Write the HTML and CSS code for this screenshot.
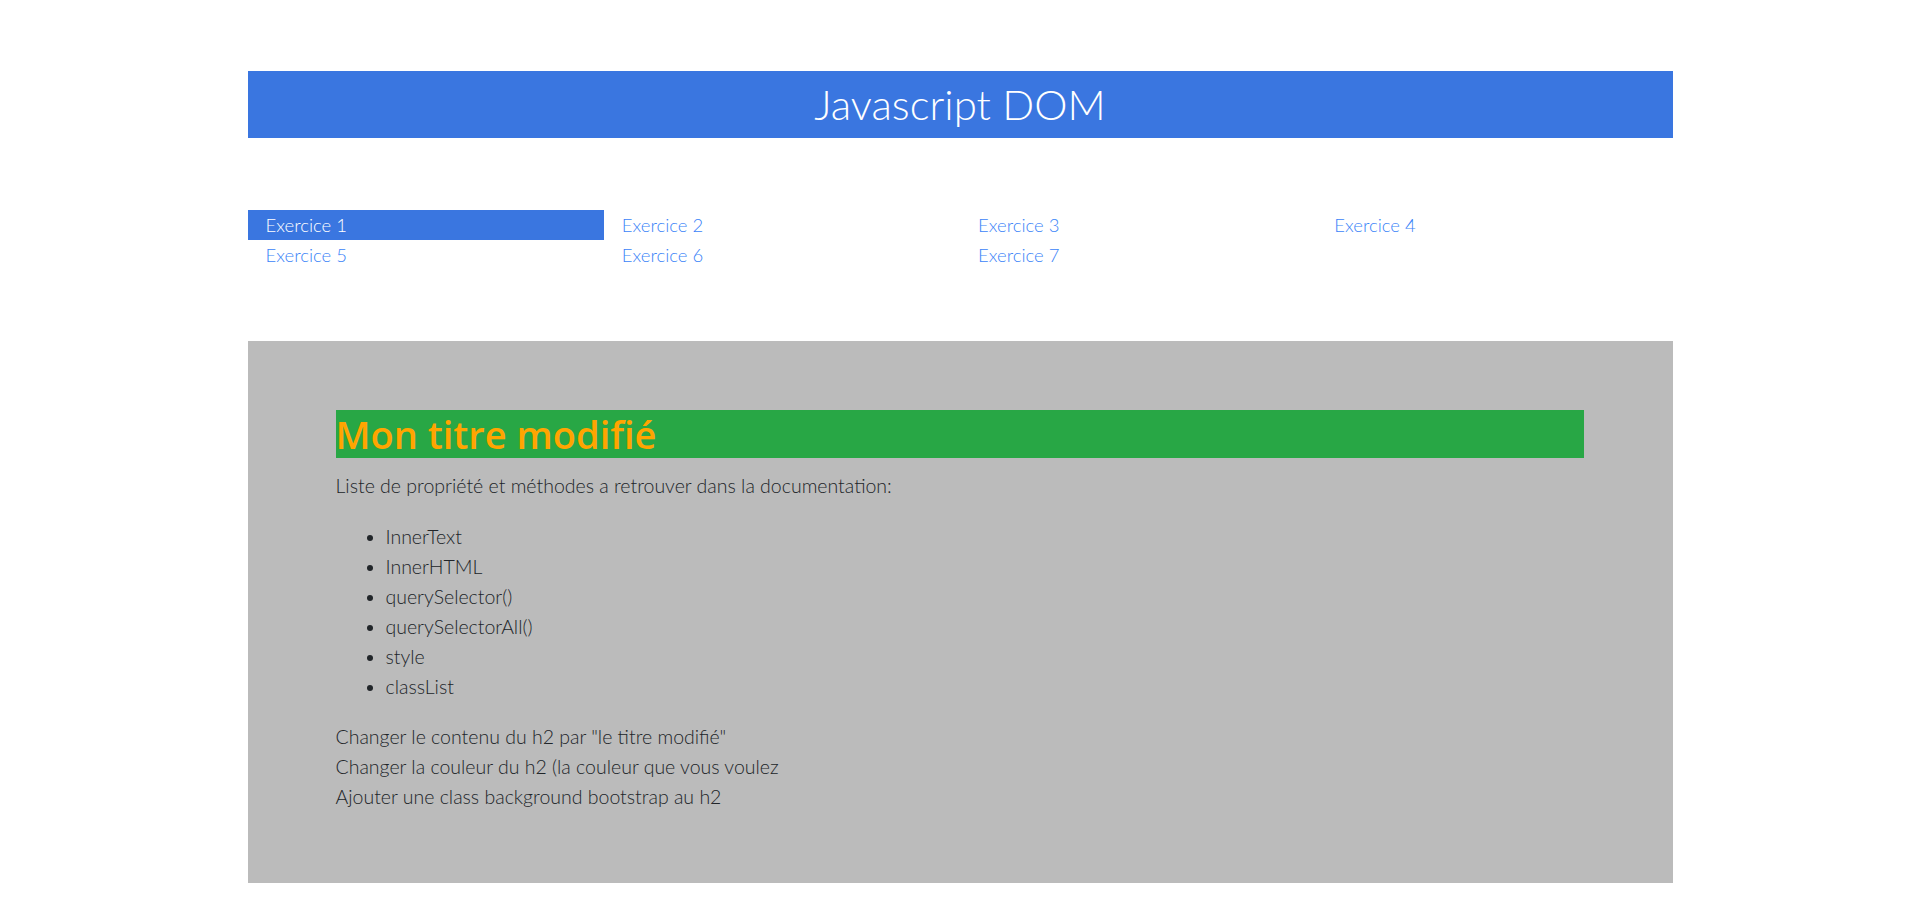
FILE: index.html
```html
<!DOCTYPE html>
<html lang="fr">
<head>
<meta charset="utf-8">
<title>Javascript DOM</title>
<link rel="stylesheet" href="styles.css">
</head>
<body>
<div class="container">
  <header class="banner">
    <h1 class="banner-title">Javascript DOM</h1>
  </header>
  <nav class="exo-nav">
    <a class="exo-link active" href="#">Exercice 1</a>
    <a class="exo-link" href="#">Exercice 2</a>
    <a class="exo-link" href="#">Exercice 3</a>
    <a class="exo-link" href="#">Exercice 4</a>
    <a class="exo-link" href="#">Exercice 5</a>
    <a class="exo-link" href="#">Exercice 6</a>
    <a class="exo-link" href="#">Exercice 7</a>
  </nav>
  <section class="exo-panel">
    <h2 class="exo-title">Mon titre modifié</h2>
    <p class="intro">Liste de propriété et méthodes a retrouver dans la documentation:</p>
    <ul class="method-list">
      <li>InnerText</li>
      <li>InnerHTML</li>
      <li>querySelector()</li>
      <li>querySelectorAll()</li>
      <li>style</li>
      <li>classList</li>
    </ul>
    <p class="tasks">Changer le contenu du h2 par "le titre modifié"<br>Changer la couleur du h2 (la couleur que vous voulez<br>Ajouter une class background bootstrap au h2</p>
  </section>
</div>
</body>
</html>
```
FILE: styles.css
```css
* { box-sizing: border-box; }
html, body { margin: 0; padding: 0; background: #fff; }
body {
  font-family: Lato, "Open Sans", "Liberation Sans", sans-serif;
  font-weight: 300;
  font-size: 19.5px;
  line-height: 30px;
  color: #212529;
}
.container {
  width: 1425px;
  margin: 0 auto;
  padding-top: 71px;
}
.banner {
  background: #3a76e0;
  height: 67px;
  display: flex;
  align-items: center;
  justify-content: center;
}
.banner-title {
  margin: 0;
  font-weight: 300;
  font-size: 42px;
  line-height: 67px;
  color: #fff;
}
.exo-nav {
  margin-top: 72px;
  display: grid;
  grid-template-columns: repeat(4, 1fr);
  grid-auto-rows: 30px;
}
.exo-link {
  display: block;
  padding-left: 18px;
  color: #3b84f8;
  text-decoration: none;
  font-size: 18.5px;
  line-height: 30px;
}
.exo-link.active {
  background: #3a76e0;
  color: #fff;
}
.exo-panel {
  margin-top: 71px;
  background: #bbbbbb;
  padding: 69px 89px 55px 88px;
  height: 542px;
}
.exo-title {
  margin: 0 0 13px;
  background: #28a745;
  color: #ffa500;
  font-family: "Open Sans", Lato, sans-serif;
  font-weight: 600;
  font-size: 38px;
  line-height: 48px;
  height: 48px;
}
.intro {
  margin: 0 0 21px;
}
.method-list {
  margin: 0 0 20px;
  padding-left: 50px;
}
.tasks {
  margin: 0;
}
```
